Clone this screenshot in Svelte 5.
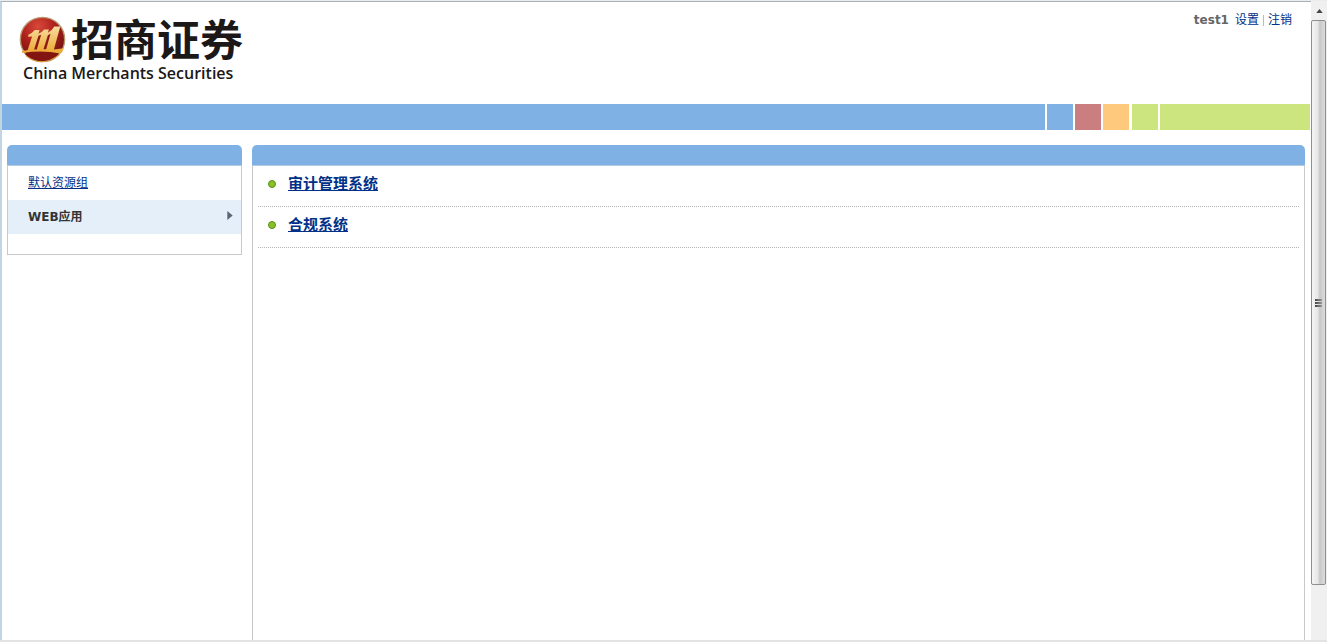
<script>
  let groups = $state([
    { name: '默认资源组', active: false },
    { name: 'WEB应用', active: true }
  ]);
  const systems = ['审计管理系统', '合规系统'];
  const swatches = ['blue', 'red', 'orange', 'green'];
</script>

<div class="window">
  <div class="page">
    <header>
      <div class="brand">
        <div class="name">
          <svg class="emblem" viewBox="14 16 138 140" aria-hidden="true">
            <defs>
              <radialGradient id="ball" cx="0.4" cy="0.2" r="0.85">
                <stop offset="0" stop-color="#d8483a" />
                <stop offset="0.45" stop-color="#ad1f1b" />
                <stop offset="1" stop-color="#64100e" />
              </radialGradient>
              <linearGradient id="gold" x1="0" y1="0" x2="0" y2="1">
                <stop offset="0" stop-color="#f7dc9e" />
                <stop offset="1" stop-color="#eba62e" />
              </linearGradient>
            </defs>
            <circle cx="83" cy="86" r="66" fill="url(#ball)" stroke="#b59a72" stroke-width="4" />
            <path
              fill="url(#gold)"
              d="M41 72 Q53 67 60 58 L74 58 L71 69 Q81 65 88 56 L102 56 L99 66 Q111 60 118 47 L136 47 L117 116 L146 112 Q144 124 135 128 Q86 117 23 126 L21 119 Q32 120 39 117 L52 77 L40 78 Z"
            />
            <path fill="#8e1916" d="M71 75 L79 72 L66 116 L58 116 Z M99 73 L107 69 L94 115 L86 115 Z" />
            <path fill="#821512" d="M29 128 Q86 120 132 131 Q112 151 82 151 Q46 150 29 128 Z" />
            <path fill="none" stroke="#dd9d3a" stroke-width="3" d="M33 134 Q82 172 133 131" />
          </svg>
          <span>招商证券</span>
        </div>
        <div class="latin">China Merchants Securities</div>
      </div>
      <div class="account">
        <b>test1</b>
        <a href="#settings">设置</a>
        <i></i>
        <a href="#logout">注销</a>
      </div>
    </header>

    <div class="stripe">
      <span class="blue lead"></span>
      {#each swatches as color}<span class="{color} square"></span>{/each}
      <span class="green tail"></span>
    </div>

    <div class="columns">
      <nav class="panel side">
        <div class="cap"></div>
        <ul>
          {#each groups as group}
            <li class:active={group.active}>
              {#if group.active}
                <b>{group.name}</b>
                <svg viewBox="0 0 6 10" aria-hidden="true"><path d="M0 0 L6 5 L0 10 Z" /></svg>
              {:else}
                <a href="#group">{group.name}</a>
              {/if}
            </li>
          {/each}
        </ul>
      </nav>
      <main class="panel">
        <div class="cap"></div>
        <ul>
          {#each systems as system}
            <li><span class="dot"></span><a href="#system">{system}</a></li>
          {/each}
        </ul>
      </main>
    </div>
  </div>

  <div class="scrollbar">
    <button aria-label="Scroll up">
      <svg viewBox="0 0 8 5" aria-hidden="true"><path d="M0 5 L4 0 L8 5 Z" /></svg>
    </button>
    <div class="thumb"><span></span><span></span><span></span></div>
    <div class="track"></div>
  </div>
</div>

<style>
  :global(body) {
    margin: 0;
    background: #fff;
  }
  .window {
    box-sizing: border-box;
    height: 100vh;
    display: flex;
    overflow: hidden;
    border-top: 1px solid #e9edf0;
    border-bottom: 2px solid #e3e3e3;
    font: 12px/18px "DejaVu Sans", "Noto Sans CJK SC", sans-serif;
    color: #333;
  }
  .page {
    flex: 1;
    min-width: 0;
    display: flex;
    flex-direction: column;
    border-top: 1px solid #a9b1b8;
    border-left: 2px solid #c3d5e3;
  }
  a {
    color: #003088;
  }
  ul {
    list-style: none;
    margin: 0;
    padding: 0;
  }
  header {
    height: 102px;
    display: flex;
    justify-content: space-between;
  }
  .brand {
    padding: 13px 0 0 17px;
    color: #1c1818;
  }
  .name {
    display: flex;
    align-items: center;
    gap: 5px;
    height: 48px;
    font: 700 43px/44px "Noto Sans CJK SC", sans-serif;
  }
  .name span {
    padding-bottom: 4px;
  }
  .emblem {
    width: 47px;
    height: 47px;
  }
  .latin {
    padding-left: 4px;
    font: 600 16px/20px "Open Sans", "Noto Sans", sans-serif;
  }
  .account {
    display: flex;
    align-items: center;
    gap: 4px;
    height: 18px;
    padding: 9px 19px 0 0;
  }
  .account b {
    color: #666;
    margin-right: 2px;
  }
  .account a {
    text-decoration: none;
  }
  .account i {
    width: 1px;
    height: 11px;
    background: #bbb;
  }
  .stripe {
    display: flex;
    gap: 2px;
    height: 26px;
    margin-right: 1px;
  }
  .lead {
    flex: 1;
  }
  .square {
    width: 26px;
  }
  .square.green {
    margin-left: 1px;
  }
  .tail {
    width: 150px;
  }
  .blue {
    background: #7fb1e5;
  }
  .red {
    background: #cb7e7f;
  }
  .orange {
    background: #fec97d;
  }
  .green {
    background: #cce57e;
  }
  .columns {
    flex: 1;
    display: flex;
    align-items: flex-start;
    gap: 10px;
    padding: 15px 6px 0 5px;
  }
  .panel {
    box-sizing: border-box;
  }
  .cap {
    height: 20px;
    background: #7fb1e5;
    border-bottom: 1px solid #b4cadf;
    border-radius: 5px 5px 0 0;
  }
  .side {
    width: 235px;
  }
  .side ul {
    border: 1px solid #c9c9c9;
    border-top: 0;
    padding-bottom: 20px;
  }
  .side li {
    display: flex;
    align-items: center;
    justify-content: space-between;
    box-sizing: border-box;
    height: 34px;
    padding: 0 8px 0 20px;
  }
  .side .active {
    background: #e5eff9;
  }
  .side svg {
    width: 6px;
    height: 9px;
    margin-bottom: 4px;
    fill: #596673;
  }
  main {
    flex: 1;
    align-self: stretch;
    display: flex;
    flex-direction: column;
  }
  main ul {
    flex: 1;
    padding: 0 5px;
    border: solid #c9c9c9;
    border-width: 0 1px;
  }
  main li {
    display: flex;
    align-items: center;
    gap: 12px;
    height: 36px;
    padding: 0 0 4px 10px;
    border-bottom: 1px dotted #b5b5b5;
    font-size: 15px;
    font-weight: bold;
  }
  .dot {
    box-sizing: border-box;
    width: 8px;
    height: 8px;
    border: 1px solid #5c8a1c;
    border-radius: 50%;
    background: #86c224;
  }
  .scrollbar {
    box-sizing: border-box;
    width: 16px;
    display: flex;
    flex-direction: column;
    background: #f0f0f0;
  }
  .scrollbar button {
    display: flex;
    align-items: center;
    justify-content: center;
    height: 19px;
    padding: 0;
    border: 0;
    background: #f0f0f0;
  }
  .scrollbar svg {
    width: 7px;
    height: 4px;
    fill: #444;
  }
  .thumb {
    flex: 565;
    display: flex;
    flex-direction: column;
    align-items: center;
    justify-content: center;
    gap: 1px;
    box-sizing: border-box;
    margin-right: 1px;
    border: 1px solid #8f8f8f;
    border-radius: 2px;
    background: linear-gradient(90deg, #f5f5f5, #e6e6e6 45%, #c8c8c8 60%, #dcdcdc);
  }
  .thumb span {
    width: 7px;
    height: 2px;
    background: linear-gradient(90deg, #444, #999);
  }
  .track {
    flex: 55;
  }
</style>
